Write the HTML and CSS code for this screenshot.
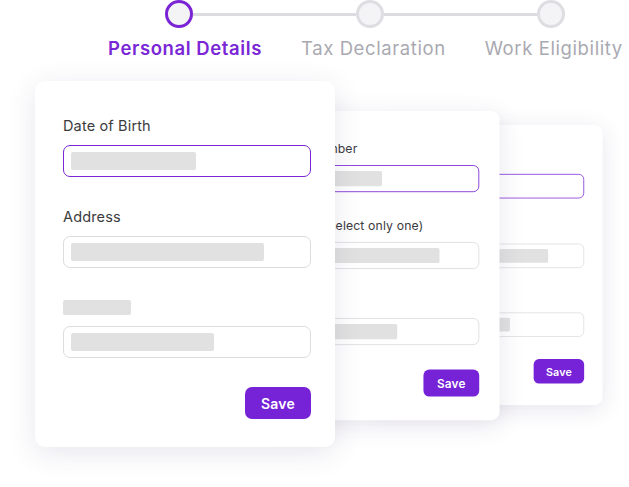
FILE: index.html
```html
<!DOCTYPE html>
<html lang="en">
<head>
<meta charset="utf-8">
<title>Onboarding steps</title>
<link rel="stylesheet" href="styles.css">
</head>
<body>
<div class="page">
  <div class="stepper">
    <div class="track">
      <span class="dot dot-active"></span>
      <span class="line line-a"></span>
      <span class="dot"></span>
      <span class="line line-b"></span>
      <span class="dot"></span>
    </div>
    <div class="step-labels">
      <span class="step-label step-active">Personal Details</span>
      <span class="step-label">Tax Declaration</span>
      <span class="step-label">Work Eligibility</span>
    </div>
  </div>

  <div class="stage">
    <div class="card card-back">
      <div class="field">
        <div class="label"></div>
        <div class="input input-focus"><span class="bar bar-1"></span></div>
      </div>
      <div class="field">
        <div class="label"></div>
        <div class="input"><span class="bar bar-2"></span></div>
      </div>
      <div class="field">
        <div class="label"><span class="label-bar"></span></div>
        <div class="input"><span class="bar bar-3"></span></div>
      </div>
      <div class="actions"><button class="save">Save</button></div>
    </div>

    <div class="card card-mid">
      <div class="field">
        <div class="label">Tax ID Number</div>
        <div class="input input-focus"><span class="bar bar-1"></span></div>
      </div>
      <div class="field">
        <div class="label">Resident (select only one)</div>
        <div class="input"><span class="bar bar-2"></span></div>
      </div>
      <div class="field">
        <div class="label"><span class="label-bar"></span></div>
        <div class="input"><span class="bar bar-3"></span></div>
      </div>
      <div class="actions"><button class="save">Save</button></div>
    </div>

    <div class="card card-front">
      <div class="field">
        <div class="label">Date of Birth</div>
        <div class="input input-focus"><span class="bar bar-1"></span></div>
      </div>
      <div class="field">
        <div class="label">Address</div>
        <div class="input"><span class="bar bar-2"></span></div>
      </div>
      <div class="field">
        <div class="label"><span class="label-bar"></span></div>
        <div class="input"><span class="bar bar-3"></span></div>
      </div>
      <div class="actions"><button class="save">Save</button></div>
    </div>
  </div>
</div>
</body>
</html>
```

FILE: styles.css
```css
* { box-sizing: border-box; }

html, body {
  margin: 0;
  padding: 0;
  background: #ffffff;
}

body {
  width: 629px;
  height: 487px;
  overflow: hidden;
  font-family: Inter, "Liberation Sans", sans-serif;
  color: #3a3a3c;
}

.page {
  width: 629px;
  height: 487px;
  overflow: hidden;
}

/* ---------- stepper ---------- */
.track {
  display: flex;
  align-items: center;
  height: 28px;
  padding-left: 165px;
}

.dot {
  flex: none;
  width: 28px;
  height: 28px;
  border-radius: 50%;
  border: 3px solid #dedee2;
  background: #f4f4f6;
}

.dot-active {
  border-color: #7a24d6;
}

.line {
  flex: none;
  height: 3px;
  background: #dcdce0;
}

.line-a { width: 163px; }
.line-b { width: 153px; }

.step-labels {
  display: flex;
  gap: 39px;
  padding-left: 108px;
  margin-top: 9px;
}

.step-label {
  font-size: 18.5px;
  line-height: 22px;
  letter-spacing: 0.6px;
  color: #a9a9b1;
  white-space: nowrap;
}

.step-active {
  color: #7a27d6;
  font-weight: 600;
}

/* ---------- stacked cards ---------- */
.stage {
  display: grid;
  margin-top: 22px;
}

.card {
  grid-area: 1 / 1;
  width: 300px;
  height: 366px;
  padding: 36px 24px 28px 28px;
  background: #ffffff;
  border-radius: 10px;
  box-shadow: 0 6px 28px rgba(72, 52, 112, 0.13);
  display: flex;
  flex-direction: column;
  transform-origin: top left;
}

.card-front {
  z-index: 3;
  margin-left: 35px;
}

.card-mid {
  z-index: 2;
  margin-left: 245.5px;
  margin-top: 29.7px;
  transform: scale(0.845);
}

.card-back {
  z-index: 1;
  margin-left: 372.5px;
  margin-top: 44px;
  transform: scale(0.765);
}

.field {
  display: flex;
  flex-direction: column;
  gap: 10px;
}

.field + .field {
  margin-top: 31px;
}

.field + .field + .field {
  margin-top: 30px;
}

.label {
  height: 18px;
  font-size: 14.5px;
  line-height: 18px;
  letter-spacing: 0.15px;
  color: #3b3b3d;
  white-space: nowrap;
  display: flex;
  align-items: flex-end;
}

.label-bar {
  display: block;
  width: 68px;
  height: 15px;
  margin-bottom: 1px;
  border-radius: 2px;
  background: #e1e1e1;
}

.input {
  height: 32px;
  border: 1px solid #dcdcdf;
  border-radius: 7px;
  padding: 6px 7px;
  display: flex;
  align-items: center;
}

.input-focus {
  border-color: #7a27d6;
}

.bar {
  display: block;
  height: 18px;
  border-radius: 2px;
  background: #e1e1e1;
}

.bar-1 { width: 125px; }
.bar-2 { width: 193px; }
.bar-3 { width: 143px; }

.actions {
  display: flex;
  justify-content: flex-end;
  margin-top: 29px;
}

.save {
  width: 66px;
  height: 32px;
  border: none;
  border-radius: 7px;
  background: #7622d7;
  color: #ffffff;
  font-family: Inter, "Liberation Sans", sans-serif;
  font-size: 14px;
  font-weight: 600;
  letter-spacing: 0.2px;
  padding: 0;
}
```
